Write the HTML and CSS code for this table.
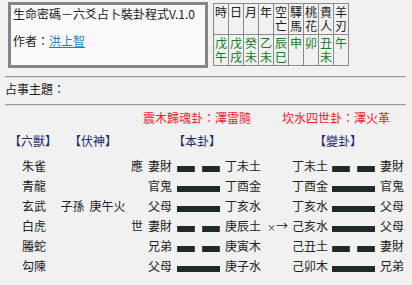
FILE: index.html
```html
<!DOCTYPE html>
<html lang="zh-Hant">
<head>
<meta charset="utf-8">
<title>生命密碼－六爻占卜裝卦程式</title>
<link rel="stylesheet" href="styles.css">
</head>
<body>
<div class="top">
  <div class="box">
    <div class="title">生命密碼－六爻占卜裝卦程式V.1.0</div>
    <div class="author">作者：<a href="#">洪上智</a></div>
  </div>
  <table class="cal">
    <tr class="head">
      <td>時</td><td>日</td><td>月</td><td>年</td><td>空亡</td><td>驛馬</td><td>桃花</td><td>貴人</td><td>羊刃</td>
    </tr>
    <tr class="val">
      <td>戊午</td><td>戊戌</td><td>癸未</td><td>乙未</td><td>辰巳</td><td>申</td><td>卯</td><td>丑未</td><td>午</td>
    </tr>
  </table>
</div>
<hr class="rule">
<div class="subject">占事主題：</div>
<hr class="rule rule2">
<div class="gua-names">
  <span>震木歸魂卦：澤雷隨</span>
  <span>坎水四世卦：澤火革</span>
</div>
<div class="grid">
  <div class="h h1">【六獸】</div>
  <div class="h h2">【伏神】</div>
  <div class="h h5">【本卦】</div>
  <div class="h h8">【變卦】</div>

  <div class="c1">朱雀</div><div class="c2"></div><div class="c3">應</div><div class="c4">妻財</div>
  <div class="c5"><span class="yao yin"><i></i><i></i></span></div>
  <div class="c6">丁未土</div><div class="c7"></div><div class="c8">丁未土</div>
  <div class="c9"><span class="yao yin"><i></i><i></i></span></div><div class="c10">妻財</div>

  <div class="c1">青龍</div><div class="c2"></div><div class="c3"></div><div class="c4">官鬼</div>
  <div class="c5"><span class="yao yang"><i></i></span></div>
  <div class="c6">丁酉金</div><div class="c7"></div><div class="c8">丁酉金</div>
  <div class="c9"><span class="yao yang"><i></i></span></div><div class="c10">官鬼</div>

  <div class="c1">玄武</div><div class="c2"><span class="fu-rel">子孫</span>庚午火</div><div class="c3"></div><div class="c4">父母</div>
  <div class="c5"><span class="yao yang"><i></i></span></div>
  <div class="c6">丁亥水</div><div class="c7"></div><div class="c8">丁亥水</div>
  <div class="c9"><span class="yao yang"><i></i></span></div><div class="c10">父母</div>

  <div class="c1">白虎</div><div class="c2"></div><div class="c3">世</div><div class="c4">妻財</div>
  <div class="c5"><span class="yao yin"><i></i><i></i></span></div>
  <div class="c6">庚辰土</div><div class="c7"><span class="x">×</span>→</div><div class="c8">己亥水</div>
  <div class="c9"><span class="yao yang"><i></i></span></div><div class="c10">父母</div>

  <div class="c1">螣蛇</div><div class="c2"></div><div class="c3"></div><div class="c4">兄弟</div>
  <div class="c5"><span class="yao yin"><i></i><i></i></span></div>
  <div class="c6">庚寅木</div><div class="c7"></div><div class="c8">己丑土</div>
  <div class="c9"><span class="yao yin"><i></i><i></i></span></div><div class="c10">妻財</div>

  <div class="c1">勾陳</div><div class="c2"></div><div class="c3"></div><div class="c4">父母</div>
  <div class="c5"><span class="yao yang"><i></i></span></div>
  <div class="c6">庚子水</div><div class="c7"></div><div class="c8">己卯木</div>
  <div class="c9"><span class="yao yang"><i></i></span></div><div class="c10">兄弟</div>
</div>
</body>
</html>
```
FILE: styles.css
```css
html, body {
  margin: 0;
  padding: 0;
  background: #f1f1f1;
}
body {
  padding: 2px 6px 0 5px;
  font-family: "Noto Sans CJK TC", "Noto Sans", sans-serif;
  font-size: 12px;
  line-height: 14px;
  color: #222;
}
.top {
  display: flex;
  align-items: flex-start;
  gap: 5px;
  padding-left: 3px;
  height: 66px;
}
.box {
  box-sizing: border-box;
  width: 200px;
  height: 66px;
  border: 3px solid #858585;
  background: #f9f9f9;
  padding: 1px 0 0 2px;
}
.title {
  white-space: nowrap;
  line-height: 15px;
}
.author {
  margin-top: 12px;
  line-height: 15px;
}
.author a {
  color: #1a7fd0;
  text-decoration: underline;
}
.cal {
  border-collapse: collapse;
  margin-top: 1px;
  border: 1px solid #8a8a8a;
}
.cal td {
  border: 1px solid #8a8a8a;
  width: 15px;
  min-width: 15px;
  max-width: 15px;
  height: 31px;
  padding: 1px 0 0 1px;
  box-sizing: border-box;
  vertical-align: top;
  line-height: 14px;
  word-break: break-all;
}
.cal .val td {
  color: #11801f;
}
.rule {
  margin: 8px 0 0 0;
  border: 0;
  border-top: 1px solid #9a9a9a;
  border-bottom: 1px solid #dedede;
  height: 0;
}
.subject {
  margin-top: 1px;
  line-height: 20px;
}
.rule2 {
  margin-top: 5px;
}
.gua-names {
  display: flex;
  gap: 31px;
  margin-top: 2px;
  padding-left: 138px;
  line-height: 20px;
  color: #f0202a;
}
.grid {
  display: grid;
  grid-template-columns: 52px 72px 17px 31px 43px 45px 23px 44px 43px 30px;
  grid-template-rows: 25px;
  grid-auto-rows: 20px;
  margin-top: 3px;
  line-height: 20px;
  white-space: nowrap;
}
.h {
  color: #1b2a6b;
  align-self: start;
}
.h1 { grid-column: 1; padding-left: 4px; }
.h2 { grid-column: 2; text-align: center; }
.h5 { grid-column: 4 / span 3; padding-left: 27px; }
.h8 { grid-column: 8 / span 3; padding-left: 26px; }
.c1 { grid-column: 1; text-align: center; padding-left: 6px; }
.c2 { text-align: center; }
.fu-rel { margin-right: 5px; }
.c3 { padding-left: 2px; }
.c4 { padding-left: 2px; }
.c5, .c9 {
  display: flex;
  align-items: flex-start;
  padding-top: 10px;
}
.c6 { padding-left: 5px; }
.c7 { padding-left: 2px; }
.c7 .x { font-size: 9px; }
.c8 { padding-left: 4px; }
.c10 { padding-left: 5px; }
.yao {
  display: flex;
  justify-content: space-between;
  width: 43px;
  height: 6px;
}
.yao i {
  display: block;
  height: 6px;
  background: #1e2929;
}
.yang i { width: 43px; }
.yin i {
  width: 18px;
  box-shadow: inset 1px 0 0 #5a4530, inset -1px 0 0 #5a4530;
}
```
